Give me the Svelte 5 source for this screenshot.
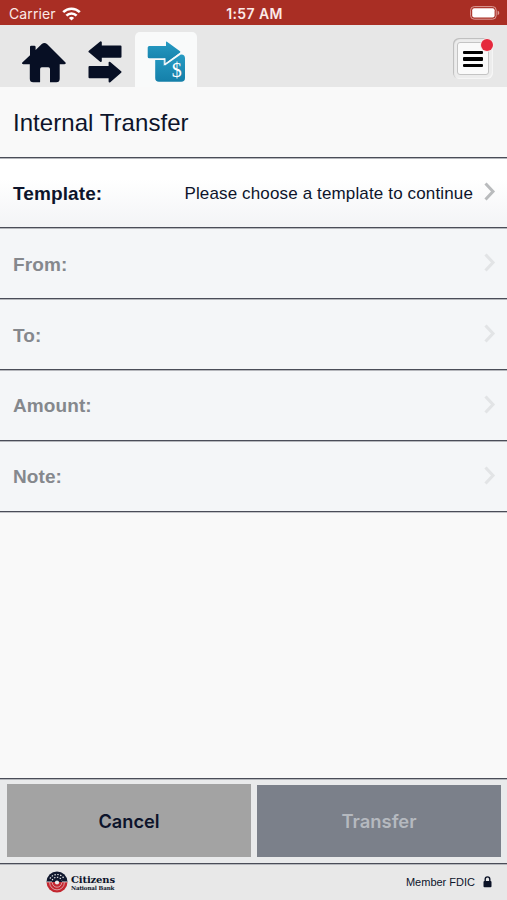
<script>
    let selected = $state('template')

    const fields = [
        {id: 'template', label: 'Template:', value: 'Please choose a template to continue', enabled: true},
        {id: 'from', label: 'From:', value: '', enabled: false},
        {id: 'to', label: 'To:', value: '', enabled: false},
        {id: 'amount', label: 'Amount:', value: '', enabled: false},
        {id: 'note', label: 'Note:', value: '', enabled: false},
    ]
</script>

<div class="screen">
    <div class="status">
        <div class="carrier">
            <span>Carrier</span>
            <svg width="19" height="14" viewBox="0 0 19 14" fill="none" stroke="#fff" stroke-width="2.6">
                <path d="M1.2 5.2a11.8 11.8 0 0 1 16.6 0" />
                <path d="M4.4 8.6a7.2 7.2 0 0 1 10.2 0" />
                <path d="M9.5 13.6L6.9 10.9a3.8 3.8 0 0 1 5.2 0z" fill="#fff" stroke="none" />
            </svg>
        </div>
        <span class="time">1:57 AM</span>
        <svg class="battery" width="30" height="14" viewBox="0 0 30 14">
            <rect x="0.6" y="0.6" width="25.6" height="12.6" rx="3.6" fill="none" stroke="#dc9d98" stroke-width="1" />
            <rect x="2.2" y="2.2" width="22.4" height="9.4" rx="2" fill="#fff" />
            <path d="M27.6 4.8c2.2.6 2.2 3.8 0 4.4z" fill="#dc9d98" />
        </svg>
    </div>

    <nav>
        <button class="tab home" aria-label="Home">
            <svg width="46" height="42" viewBox="0 0 46 42" fill="#070f24">
                <path d="M20.800 2q2.600-2.200 5.200 0L44.500 20.400q1 1.600-1 1.800H38.700V36.700q0 3.500-3.400 3.500H29V27q0-1.700-1.700-1.700h-6.500q-1.700 0-1.700 1.700v13.200H12.200q-3.400 0-3.400-3.500V22.200H2.200q-2-.2-.9-1.800L9 13.200V5q0-1.200 1.200-1.200h3.200q1.200 0 1.200 1.200v3z" />
            </svg>
        </button>
        <button class="tab" aria-label="Transfers">
            <svg width="34" height="42" viewBox="0 0 34 42" fill="#070f24" stroke="#070f24" stroke-width="2" stroke-linejoin="round">
                <path d="M1.500 10.600L12.800 1.300v4.300H32.500v10.200H12.800V20z" />
                <path d="M32.500 31L21.600 21.700v4.300H1.500v10.200H21.600V40.600z" />
            </svg>
        </button>
        <button class="tab active" aria-label="Internal transfer">
            <svg width="38" height="42" viewBox="0 0 38 42">
                <defs>
                    <linearGradient id="teal" x1="0" y1="0" x2="0" y2="1">
                        <stop offset="0" stop-color="#279bc3" />
                        <stop offset="1" stop-color="#147fa9" />
                    </linearGradient>
                </defs>
                <path d="M8.200 19H18v5.500L33.800 13.400h.6q3.600 0 3.600 3.800V37q0 3.800-3.800 3.800H12q-3.800 0-3.800-3.800z" fill="url(#teal)" />
                <path d="M.7 6.600q0-1.600 1.600-1.600H19V1q0-1 1-.3L33 10.300q.9.700 0 1.400L18.500 22.500V17.300H2.300Q.7 17.300.7 15.700z" fill="url(#teal)" />
                <path d="M17.300 17.500v6.300L34 11.800" fill="none" stroke="#f4f8fa" stroke-width="1.100" />
                <text x="29.800" y="35.500" text-anchor="middle" class="dollar">$</text>
            </svg>
        </button>
        <button class="menu" aria-label="Menu">
            <span class="lines"><i></i><i></i><i></i></span>
            <span class="dot"></span>
        </button>
    </nav>

    <h1>Internal Transfer</h1>

    <ul>
        {#each fields as field}
            <li class:disabled={!field.enabled}>
                <button disabled={!field.enabled} onclick={() => selected = field.id}>
                    <strong>{field.label}</strong>
                    <span class="value">{field.value}</span>
                    <svg width="12" height="19" viewBox="0 0 12 19" fill="none" stroke="#b9bbbd" stroke-width="3">
                        <path d="M1.500 1.500l7.500 8-7.500 8" />
                    </svg>
                </button>
            </li>
        {/each}
    </ul>

    <div class="actions">
        <button class="cancel">Cancel</button>
        <button class="transfer" disabled>Transfer</button>
    </div>

    <footer>
        <div class="brand">
            <svg width="22" height="22" viewBox="0 0 22 22">
                <path d="M.5 11a10.500 10.500 0 0 1 21 0z" fill="#10182e" />
                <path d="M.5 11a10.500 10.500 0 0 0 21 0z" fill="#c3262f" />
                <g fill="none" stroke="#ececec" stroke-width=".8">
                    <path d="M.7 10.900H6M16 10.900h5.300" />
                    <path d="M3.600 11.500a7.400 7.400 0 0 0 14.800 0M6.300 11.500a4.700 4.700 0 0 0 9.400 0" stroke-width=".6" />
                    <path d="M4 7.600a8 8 0 0 1 14 0M6.200 9.300a5.300 5.300 0 0 1 9.600 0" stroke-width="1.200" stroke-dasharray="1.400 1.500" />
                </g>
                <circle cx="11" cy="11.500" r="2.100" fill="#ececec" />
            </svg>
            <div class="name">
                <b>Citizens</b>
                <small>National Bank</small>
            </div>
        </div>
        <div class="member">
            <span>Member FDIC</span>
            <svg width="9" height="12" viewBox="0 0 9 12">
                <path d="M2.200 6V3.200a2.300 2.300 0 0 1 4.600 0V6" fill="none" stroke="#0b1226" stroke-width="1.400" />
                <rect x=".5" y="5" width="8" height="6.200" rx="1" fill="#0b1226" />
            </svg>
        </div>
    </footer>
</div>

<style>
    :global(body) {
        background: #f9f9f9;
    }

    .screen {
        display: flex;
        flex-direction: column;
        height: 900px;
        overflow: hidden;
        background: #f9f9f9;
        color: #0d142b;
        font-family: "Liberation Sans", Arial, sans-serif;
    }

    button {
        border: 0;
        margin: 0;
        padding: 0;
        background: none;
        color: inherit;
        font: inherit;
    }

    svg {
        display: block;
        flex: none;
    }

    .status {
        display: grid;
        grid-template-columns: 1fr auto 1fr;
        align-items: center;
        height: 25px;
        padding: 2px 7px 0 9px;
        box-sizing: border-box;
        background: #a92e24;
        color: #fbe9e7;
        font: 14px/20px Inter, sans-serif;
    }

    .carrier {
        display: flex;
        align-items: center;
        gap: 6px;
        letter-spacing: .1px;
    }

    .time {
        font-weight: 600;
        letter-spacing: .4px;
    }

    .battery {
        justify-self: end;
        margin-bottom: 1px;
    }

    nav {
        display: flex;
        align-items: flex-end;
        height: 62px;
        padding: 0 14px 0 13px;
        box-sizing: border-box;
        background: #e7e7e7;
    }

    .tab {
        display: flex;
        justify-content: center;
        align-items: flex-start;
        width: 61px;
        height: 55px;
        padding-top: 9px;
        box-sizing: border-box;
    }

    .home {
        padding-top: 10px;
    }

    .tab.active {
        border-radius: 5px 5px 0 0;
        background: #f9fafa;
        width: 62px;
    }

    .dollar {
        font: 20px "Liberation Serif", serif;
        fill: #fff;
    }

    .menu {
        position: relative;
        width: 40px;
        height: 41px;
        margin: 0 0 8px auto;
        padding: 4px;
        border-radius: 6px;
        background: #ececec;
        box-shadow: inset 1px 1px 1px #bcbcbc, inset -1px -1px 1px #f7f7f7;
    }

    .lines {
        display: flex;
        flex-direction: column;
        justify-content: center;
        align-items: center;
        gap: 3px;
        height: 33px;
        padding-top: 1px;
        box-sizing: border-box;
        border: 1px solid #c4c4c4;
        border-radius: 3px;
        background: #fafafa;
    }

    .lines i {
        width: 20px;
        height: 3.5px;
        border-radius: 1px;
        background: #000;
    }

    .dot {
        position: absolute;
        top: 1px;
        right: 0;
        width: 12px;
        height: 12px;
        border-radius: 50%;
        background: #e5283c;
        box-shadow: 0 0 0 1px #f3e8e9;
    }

    h1 {
        height: 69.6px;
        margin: 0;
        padding-left: 13px;
        font-size: 24px;
        font-weight: 400;
        letter-spacing: .05px;
        line-height: 71px;
    }

    ul {
        margin: 0;
        padding: 0;
        list-style: none;
        border-bottom: 1px solid #4a4d58;
        box-shadow: 0 1px #c3c4c8;
    }

    li {
        height: 70.8px;
        box-sizing: border-box;
        border-top: 1px solid #4a4d58;
        background: linear-gradient(#fff 30%, #f3f4f6);
        box-shadow: inset 0 1px #b5b7bc;
    }

    li.disabled {
        background: #f4f6f8;
    }

    li button {
        display: flex;
        align-items: center;
        width: 100%;
        height: 100%;
        padding: 3px 11px 0 13px;
    }

    li strong {
        font-size: 19px;
        letter-spacing: .1px;
    }

    .disabled strong {
        color: #85888d;
    }

    .disabled svg {
        opacity: .3;
    }

    .value {
        flex: 1;
        margin-right: 11px;
        text-align: right;
        font-size: 17px;
        letter-spacing: .14px;
    }

    li svg {
        position: relative;
        top: -2px;
    }

    .actions {
        display: grid;
        grid-template-columns: 1fr 1fr;
        gap: 6px;
        height: 86px;
        margin-top: auto;
        padding: 5px 6px 6px 7px;
        box-sizing: border-box;
        border-top: 1px solid #4a4d58;
        border-bottom: 1px solid #4a4d58;
        background: #e9eaeb;
        box-shadow: inset 0 1px #b5b7bc, 0 1px #b5b7bc;
    }

    .actions button {
        font: 600 18.2px Inter, sans-serif;
    }

    .cancel {
        background: #a3a3a3;
    }

    .actions .transfer {
        margin-top: 1px;
        background: #7b808a;
        color: #b5b9bf;
        font-size: 18.4px;
    }

    footer {
        display: flex;
        justify-content: space-between;
        align-items: center;
        height: 36px;
        padding: 0 15px 0 46px;
        box-sizing: border-box;
        background: linear-gradient(#b5b7bc 1px, #e8e8e8 1px);
    }

    .brand, .member {
        display: flex;
        align-items: center;
    }

    .name {
        display: flex;
        flex-direction: column;
        margin: 3px 0 0 3px;
        font-family: "DejaVu Serif", serif;
        font-weight: 700;
        line-height: 9px;
    }

    .name b {
        font-size: 10px;
        letter-spacing: -.15px;
    }

    .name small {
        font-size: 5.6px;
        letter-spacing: -.15px;
    }

    .member {
        gap: 8px;
        font-size: 11px;
    }
</style>
